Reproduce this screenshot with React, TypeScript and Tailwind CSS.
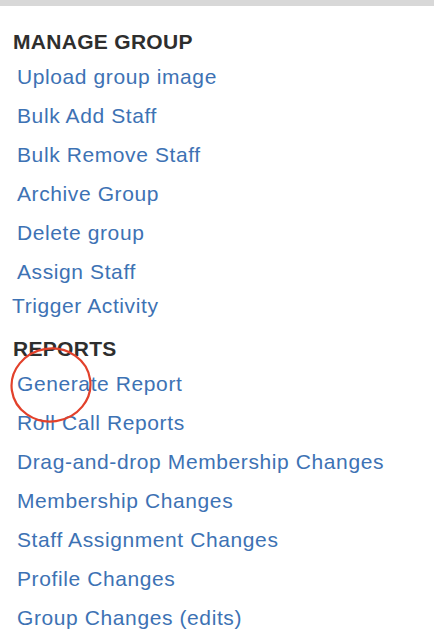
import React from 'react';

const manageLinks = [
  'Upload group image',
  'Bulk Add Staff',
  'Bulk Remove Staff',
  'Archive Group',
  'Delete group',
  'Assign Staff',
];

const reportLinks = [
  'Generate Report',
  'Roll Call Reports',
  'Drag-and-drop Membership Changes',
  'Membership Changes',
  'Staff Assignment Changes',
  'Profile Changes',
  'Group Changes (edits)',
];

const font = { fontFamily: '"Liberation Sans", Arial, Helvetica, sans-serif' };

export default function App() {
  return (
    <div className="w-[434px] h-[634px] overflow-hidden bg-white" style={font}>
      <div className="h-[6px] bg-[#d8d8d8]" />

      <div className="pl-[13px] pt-[21px]">
        <h3 className="text-[21px] leading-[30px] font-bold tracking-[0.3px] text-[#2e2e2e]">MANAGE GROUP</h3>
        <ul>
          {manageLinks.map((label) => (
            <li key={label} className="pl-[4px] text-[21px] leading-[39px] tracking-[0.6px] text-[#3d72b4]">
              <a href="#">{label}</a>
            </li>
          ))}
        </ul>
        <a href="#" className="block -ml-[1px] text-[21px] leading-[30px] tracking-[0.6px] text-[#3d72b4]">
          Trigger Activity
        </a>

        <h3 className="mt-[13px] text-[21px] leading-[30px] font-bold tracking-[0.3px] text-[#2e2e2e]">REPORTS</h3>
        <ul className="relative">
          {reportLinks.map((label) => (
            <li key={label} className="pl-[4px] text-[21px] leading-[39px] tracking-[0.6px] text-[#3d72b4]">
              <a href="#">{label}</a>
            </li>
          ))}
          {/* red annotation circle over "Generate" */}
          <svg
            className="absolute left-[-3px] top-[-18px] pointer-events-none"
            width="84"
            height="78"
            viewBox="0 0 84 78"
          >
            <ellipse
              cx="41"
              cy="39"
              rx="39.5"
              ry="36.5"
              transform="rotate(-8 41 39)"
              fill="none"
              stroke="#e2412b"
              strokeWidth="2.2"
            />
          </svg>
        </ul>
      </div>
    </div>
  );
}
